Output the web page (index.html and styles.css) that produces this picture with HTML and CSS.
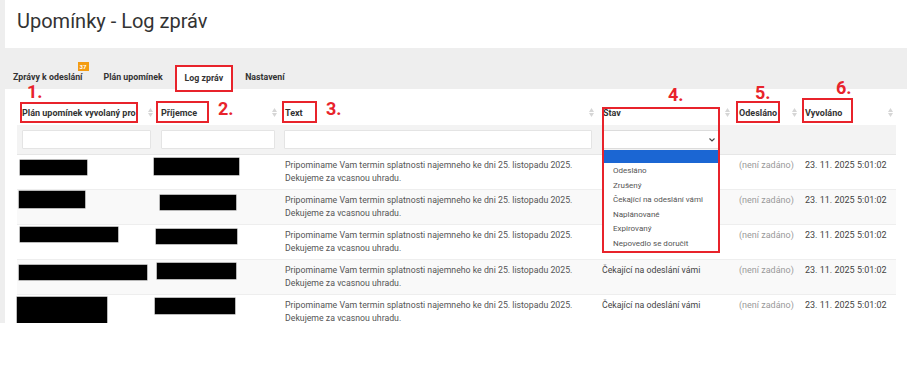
FILE: index.html
```html
<!DOCTYPE html>
<html lang="cs">
<head>
<meta charset="utf-8">
<title>Upomínky - Log zpráv</title>
<link rel="stylesheet" href="styles.css">
</head>
<body>
<div class="page">
  <div class="main">
    <header class="top"><h1>Upomínky - Log zpráv</h1></header>
    <nav class="tabs">
      <a class="tab t1">Zprávy k odeslání<span class="badge">37</span></a>
      <a class="tab t2">Plán upomínek</a>
      <a class="tab active">Log zpráv</a>
      <a class="tab t4">Nastavení</a>
    </nav>
    <section class="panel">
      <table class="grid">
        <colgroup>
          <col class="w1"><col class="w2"><col class="w3"><col class="w4"><col class="w5"><col class="w6">
        </colgroup>
        <thead>
          <tr class="head">
            <th class="h1"><div class="th"><span class="lbl l1">Plán upomínek vyvolaný pro<b class="num n1">1.</b></span><svg class="sort" width="5" height="9" viewBox="0 0 5 9"><path d="M0 4 2.5 0 5 4Z M0 5 2.5 9 5 5Z"/></svg></div></th>
            <th class="h2"><div class="th"><span class="lbl l2">Příjemce<b class="num n2">2.</b></span><svg class="sort" width="5" height="9" viewBox="0 0 5 9"><path d="M0 4 2.5 0 5 4Z M0 5 2.5 9 5 5Z"/></svg></div></th>
            <th class="h3"><div class="th"><span class="lbl l3">Text<b class="num n3">3.</b></span><svg class="sort" width="5" height="9" viewBox="0 0 5 9"><path d="M0 4 2.5 0 5 4Z M0 5 2.5 9 5 5Z"/></svg></div></th>
            <th class="h4"><div class="th"><span class="lbl l4">Stav</span><svg class="sort" width="5" height="9" viewBox="0 0 5 9"><path d="M0 4 2.5 0 5 4Z M0 5 2.5 9 5 5Z"/></svg></div><div class="mark4"><b class="num n4">4.</b></div></th>
            <th class="h5"><div class="th"><span class="lbl l5">Odesláno<b class="num n5">5.</b></span><svg class="sort" width="5" height="9" viewBox="0 0 5 9"><path d="M0 4 2.5 0 5 4Z M0 5 2.5 9 5 5Z"/></svg></div></th>
            <th class="h6"><div class="th"><span class="lbl l6">Vyvoláno<b class="num n6">6.</b></span><svg class="sort" width="5" height="9" viewBox="0 0 5 9"><path d="M0 4 2.5 0 5 4Z M0 5 2.5 9 5 5Z"/></svg></div></th>
          </tr>
          <tr class="filter">
            <td class="f1"><input class="inp" type="text"></td>
            <td class="f2"><input class="inp" type="text"></td>
            <td class="f3"><input class="inp" type="text"></td>
            <td class="f4">
              <div class="select"><svg class="chev" width="6" height="4" viewBox="0 0 6 4"><path d="M0.5 0.5 3 3 5.5 0.5"/></svg></div>
              <ul class="options">
                <li class="opt sel"></li>
                <li class="opt">Odesláno</li>
                <li class="opt">Zrušený</li>
                <li class="opt">Čekající na odeslání vámi</li>
                <li class="opt">Naplánované</li>
                <li class="opt">Expirovaný</li>
                <li class="opt">Nepovedlo se doručit</li>
              </ul>
            </td>
            <td></td>
            <td></td>
          </tr>
        </thead>
        <tbody>
          <tr class="row">
            <td class="rc"><span class="rd a1"></span></td>
            <td class="rc"><span class="rd b1"></span></td>
            <td class="txt">Pripominame Vam termin splatnosti najemneho ke dni 25. listopadu 2025. Dekujeme za vcasnou uhradu.</td>
            <td class="st"></td>
            <td class="na">(není zadáno)</td>
            <td class="dt">23. 11. 2025 5:01:02</td>
          </tr>
          <tr class="row alt">
            <td class="rc"><span class="rd a2"></span></td>
            <td class="rc"><span class="rd b2"></span></td>
            <td class="txt">Pripominame Vam termin splatnosti najemneho ke dni 25. listopadu 2025. Dekujeme za vcasnou uhradu.</td>
            <td class="st"></td>
            <td class="na">(není zadáno)</td>
            <td class="dt">23. 11. 2025 5:01:02</td>
          </tr>
          <tr class="row">
            <td class="rc"><span class="rd a3"></span></td>
            <td class="rc"><span class="rd b3"></span></td>
            <td class="txt">Pripominame Vam termin splatnosti najemneho ke dni 25. listopadu 2025. Dekujeme za vcasnou uhradu.</td>
            <td class="st"></td>
            <td class="na">(není zadáno)</td>
            <td class="dt">23. 11. 2025 5:01:02</td>
          </tr>
          <tr class="row alt">
            <td class="rc"><span class="rd a4"></span></td>
            <td class="rc"><span class="rd b4"></span></td>
            <td class="txt">Pripominame Vam termin splatnosti najemneho ke dni 25. listopadu 2025. Dekujeme za vcasnou uhradu.</td>
            <td class="st">Čekající na odeslání vámi</td>
            <td class="na">(není zadáno)</td>
            <td class="dt">23. 11. 2025 5:01:02</td>
          </tr>
          <tr class="row">
            <td class="rc"><span class="rd a5"></span></td>
            <td class="rc"><span class="rd b5"></span></td>
            <td class="txt">Pripominame Vam termin splatnosti najemneho ke dni 25. listopadu 2025. Dekujeme za vcasnou uhradu.</td>
            <td class="st">Čekající na odeslání vámi</td>
            <td class="na">(není zadáno)</td>
            <td class="dt">23. 11. 2025 5:01:02</td>
          </tr>
        </tbody>
      </table>
    </section>
  </div>
</div>
</body>
</html>
```

FILE: styles.css
```css
* { box-sizing: border-box; }
html, body { margin: 0; padding: 0; background: #fff; }
body { font-family: Roboto, "Liberation Sans", Arial, sans-serif; color: #333; }

.page {
  width: 907px;
  height: 323px;
  overflow: hidden;
  background: #eeeeee;
  padding-left: 5px;
}
.main { display: flex; flex-direction: column; }

.top {
  height: 48px;
  background: #fff;
  display: flex;
  align-items: center;
  padding: 0 12px;
}
.top h1 {
  margin: 0 0 6px;
  font-size: 20px;
  font-weight: 400;
  color: #333;
}

.tabs {
  height: 41px;
  background: #eeeeee;
  display: flex;
  align-items: flex-end;
  position: relative;
  z-index: 2;
}
.tab {
  position: relative;
  height: 24px;
  display: flex;
  align-items: center;
  font-size: 8.8px;
  font-weight: 700;
  color: #333;
  padding: 0 10px;
}
.tab.t1 { padding-left: 8px; padding-right: 11px; }
.tab.t2 { padding: 0 12px 0 10px; }
.tab.active {
  background: #fff;
  border: 2px solid #e8232b;
  height: 27px;
  margin-bottom: -3px;
  padding: 0 8px 1px 8px;
}
.tab.t4 { padding-left: 12px; }
.badge {
  position: absolute;
  top: -3px;
  right: 5px;
  width: 11px;
  height: 9px;
  background: #f39c12;
  color: #fff;
  font-size: 6px;
  font-weight: 700;
  line-height: 9px;
  text-align: center;
}

.panel {
  background: #fff;
  padding: 10px 11px 0 12px;
  flex: 1;
}
.grid {
  width: 879px;
  table-layout: fixed;
  border-collapse: collapse;
}
.w1 { width: 139px; }
.w2 { width: 124px; }
.w3 { width: 317px; }
.w4 { width: 136px; }
.w5 { width: 67px; }
.w6 { width: 96px; }

.head th {
  height: 26px;
  padding: 0 3px 2px 0;
  vertical-align: bottom;
  text-align: left;
  font-size: 9px;
  font-weight: 700;
  color: #333;
  position: relative;
}
.th {
  display: flex;
  align-items: center;
  justify-content: space-between;
  height: 23px;
}
.sort { fill: #d6d6d6; flex: none; margin-bottom: -1px; }
.lbl {
  position: relative;
  line-height: 12px;
  border: 2px solid #e8232b;
  padding: 3px 1px 2px;
  white-space: nowrap;
  align-self: flex-end;
}
.l1 { margin-left: 3px; padding: 3px 0 2px; }
.l2 { margin-left: 0; padding-left: 3px; padding-right: 10px; padding-top: 4px; }
.l3 { margin-left: 2px; padding-right: 12px; padding-top: 4px; }
.l4 { border-color: transparent; margin-left: 3px; }
.l5 { margin-left: 3px; padding-top: 4px; }
.l6 { margin-left: 2px; padding-right: 9px; padding-top: 7px; }

.num {
  position: absolute;
  z-index: 10;
  font-size: 18px;
  line-height: 18px;
  font-weight: 700;
  color: #e8232b;
}
.n1 { left: 5px; top: -21px; }
.n2 { left: 60px; top: -3px; }
.n3 { left: 42px; top: -3px; }
.n4 { left: 64px; top: -23px; }
.n5 { left: 17px; top: -19px; }
.n6 { left: 32px; top: -21px; }

.mark4 {
  position: absolute;
  left: 5px;
  top: 8px;
  width: 118px;
  height: 146px;
  border: 2px solid #e8232b;
  z-index: 5;
}

.filter td {
  background: #f3f3f3;
  height: 29px;
  padding: 5px 5px 5px;
  border-bottom: 1px solid #e6e6e6;
  vertical-align: top;
}
.filter .f3 { padding-left: 4px; }
.filter .f4 { padding-left: 6px; position: relative; }
.inp {
  display: block;
  width: 100%;
  height: 19px;
  border: 1px solid #e4e4e4;
  background: #fff;
  border-radius: 1px;
  margin: 0;
  padding: 0 4px;
  font: inherit;
}
.select {
  width: 116px;
  height: 19px;
  background: #fff;
  border: 1px solid #dcdcdc;
  display: flex;
  align-items: center;
  justify-content: flex-end;
  padding-right: 3px;
}
.chev { fill: none; stroke: #444; stroke-width: 1.1; }
.options {
  position: absolute;
  left: 6px;
  top: 25px;
  width: 116px;
  margin: 0;
  padding: 0 0 4px;
  list-style: none;
  background: #fff;
  z-index: 4;
}
.opt {
  height: 14.6px;
  line-height: 14.6px;
  font-size: 8px;
  color: #555;
  padding-left: 10px;
  white-space: nowrap;
}
.opt.sel { background: #1b66d3; height: 13px; margin-bottom: 1px; }

.row td {
  height: 35px;
  border-top: 1px solid #eeeeee;
  vertical-align: top;
  padding: 4px 5px 0;
  font-size: 9px;
  line-height: 13px;
  color: #555;
}
.row.alt td { background: #f9f9f9; }
.row td.txt { font-size: 8.75px; }
.row td.rc { padding: 0; }
.row td.na { color: #999; padding-left: 6px; white-space: nowrap; }
.row td.dt { color: #444; white-space: nowrap; }
.row td.st { color: #444; white-space: nowrap; font-size: 8.75px; }

.rd { display: block; background: #000; box-shadow: 0 0 0 0.5px #777; }
.a1 { width: 67px; height: 15px; margin: 5px 0 0 3px; }
.b1 { width: 85px; height: 17px; margin: 3px 0 0 -2px; }
.a2 { width: 66px; height: 17px; margin: 1px 0 0 2px; }
.b2 { width: 76px; height: 15px; margin: 5px 0 0 4px; }
.a3 { width: 98px; height: 15px; margin: 2px 0 0 3px; }
.b3 { width: 81px; height: 15px; margin: 4px 0 0 0; }
.a4 { width: 128px; height: 15px; margin: 5px 0 0 2px; }
.b4 { width: 79px; height: 16px; margin: 3px 0 0 1px; }
.a5 { width: 90px; height: 26px; margin: 2px 0 0 0; }
.b5 { width: 80px; height: 16px; margin: 3px 0 0 -1px; }
```
